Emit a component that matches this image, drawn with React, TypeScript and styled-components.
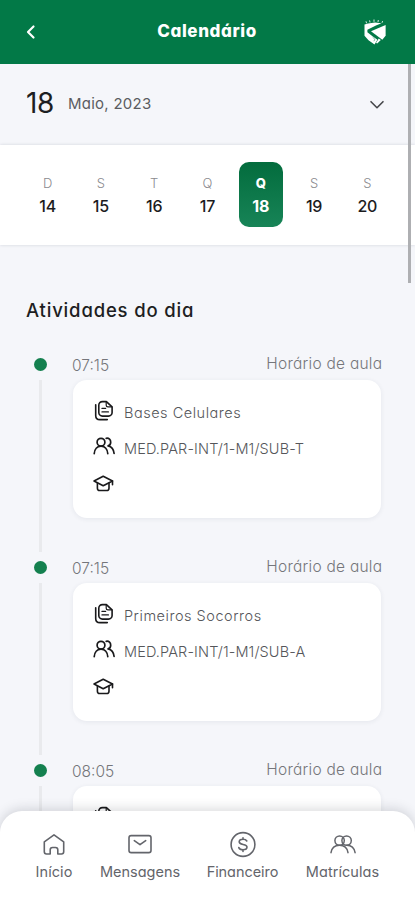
import React from 'react';
import styled, { createGlobalStyle } from 'styled-components';

const GlobalStyle = createGlobalStyle`
  * { box-sizing: border-box; }
  body {
    margin: 0;
    overflow: hidden;
    font-family: Inter, "Open Sans", sans-serif;
    font-feature-settings: "cv11";
  }
  svg { display: block; flex: none; }
`;

const Screen = styled.div`
  position: relative;
  width: 415px;
  height: 900px;
  overflow: hidden;
  display: flex;
  flex-direction: column;
  background: #f5f6fa;
`;

const Header = styled.header`
  flex: none;
  height: 64px;
  padding: 0 29px 0 22px;
  display: flex;
  align-items: center;
  justify-content: space-between;
  background: #027947;
  color: #fff;
`;

const Title = styled.h1`
  margin: 0 0 2px 10px;
  font-size: 17px;
  font-weight: 800;
  letter-spacing: 0.6px;
`;

const DateRow = styled.div`
  flex: none;
  height: 81px;
  padding: 0 28px 0 26px;
  display: flex;
  align-items: center;
  color: #1d1e22;
`;

const DayNumber = styled.span`
  width: 42px;
  font-size: 28px;
  line-height: 34px;
  margin-bottom: 4px;
  letter-spacing: -0.5px;
`;

const Month = styled.span`
  flex: 1;
  font-size: 15px;
  color: #5b5c61;
  margin-bottom: 2px;
  letter-spacing: 0.25px;
`;

const Week = styled.div`
  flex: none;
  height: 100px;
  padding: 17px 21px 0;
  display: grid;
  grid-template-columns: repeat(7, 1fr);
  justify-items: center;
  align-items: start;
  background: #fff;
  box-shadow: 0 0 3px rgba(30, 40, 60, 0.16);
`;

const Day = styled.div<{ $active?: boolean }>`
  width: 44px;
  height: 65px;
  padding-top: 13px;
  border-radius: 10px;
  display: flex;
  flex-direction: column;
  align-items: center;
  color: ${(p) => (p.$active ? '#fff' : '#1c1c1e')};
  background: ${(p) => (p.$active ? 'linear-gradient(#036c3d, #178457)' : 'none')};
`;

const Letter = styled.span<{ $active?: boolean }>`
  font-size: 13px;
  line-height: 17px;
  font-weight: ${(p) => (p.$active ? 800 : 300)};
  color: ${(p) => (p.$active ? '#fff' : '#8a8a8e')};
`;

const Num = styled.span<{ $active?: boolean }>`
  margin-top: 3px;
  font-size: 16px;
  line-height: 22px;
  font-weight: ${(p) => (p.$active ? 700 : 500)};
  letter-spacing: -0.2px;
`;

const SectionTitle = styled.h2`
  margin: 52px 0 0 26px;
  font-size: 18.5px;
  line-height: 26px;
  font-weight: 500;
  color: #1d1e22;
  letter-spacing: 0.83px;
`;

const Timeline = styled.div`
  padding: 35px 34px 0;
`;

const Entry = styled.div`
  height: 203px;
  display: grid;
  grid-template-columns: 39px 1fr;
`;

const Rail = styled.div`
  display: flex;
  flex-direction: column;
  align-items: flex-start;
`;

const Dot = styled.div`
  flex: none;
  width: 13px;
  height: 13px;
  border-radius: 50%;
  background: #14804f;
`;

const Line = styled.div`
  width: 3px;
  height: 172px;
  margin: 9px 0 0 5px;
  background: #e9eaed;
`;

const EntryHead = styled.div`
  height: 22px;
  margin-right: -1px;
  display: flex;
  justify-content: space-between;
  color: #75767b;
  font-size: 15.5px;
  line-height: 15px;
  font-weight: 300;
`;

const Time = styled.span`
  margin-left: -1px;
  letter-spacing: 0;
`;

const Kind = styled.span`
  margin: -2px -0.3px 0 0;
  letter-spacing: 0.25px;
`;

const Card = styled.div`
  height: 138px;
  padding: 19px 20px;
  border-radius: 14px;
  background: #fff;
  box-shadow: 0 1px 5px rgba(40, 50, 80, 0.08);
`;

const CardRow = styled.div`
  height: 36px;
  display: flex;
  align-items: flex-start;
  gap: 9px;
  color: #19191b;
`;

const CardText = styled.span<{ $code?: boolean }>`
  padding-top: 4px;
  font-size: 14.5px;
  line-height: 19px;
  font-weight: 300;
  color: #55565a;
  letter-spacing: ${(p) => (p.$code ? '0.12px' : '0.52px')};
`;

const ScrollThumb = styled.div`
  position: absolute;
  top: 64px;
  right: 4px;
  width: 3px;
  height: 219px;
  background: #aeafb2;
`;

const BottomNav = styled.nav`
  position: absolute;
  left: 0;
  right: 0;
  bottom: 0;
  height: 89px;
  padding: 19px 25px 0;
  display: grid;
  grid-template-columns: 58px 114px 91px 109px;
  border-radius: 22px 22px 0 0;
  background: #fff;
  box-shadow: 0 -2px 12px rgba(30, 35, 45, 0.17);
`;

const NavItem = styled.div`
  display: flex;
  flex-direction: column;
  align-items: center;
  gap: 5px;
  color: #63656b;
`;

const NavLabel = styled.span<{ $spacing: number }>`
  font-size: 14.5px;
  line-height: 18px;
  font-weight: 400;
  white-space: nowrap;
  letter-spacing: ${(p) => p.$spacing}px;
`;

const stroke = {
  fill: 'none',
  stroke: 'currentColor',
  strokeLinecap: 'round' as const,
  strokeLinejoin: 'round' as const,
};

const BackIcon = () => (
  <svg width="18" height="18" viewBox="0 0 18 18" {...stroke} strokeWidth="2.2">
    <path d="M11.5 3.5 6 9l5.5 5.5" />
  </svg>
);

const ShieldLogo = () => (
  <svg width="22" height="26" viewBox="0 0 22 26" fill="#fff">
    <path d="M.5 5.5 4 4.4 11 3.6l6.5.7-5 2L3.4 10.8v2.4l5.1 4 4.9 3.6-2.9 4.7-6-4.3L.5 16.8Z" />
    <path d="M21.6 6v10.8l-3.3 4L7 12.2Z" />
    <path d="m14.8 19.4 2 1.5-3.6 3.6-1.2-.8Z" />
    <path d="M2.6 4.3 2 2.3M6 3.4 5.6 1.4M10 2.8V.5M14 3l.3-2M18 3.8l.6-1.7" stroke="#d9ebe2" strokeWidth="1" fill="none" />
    <path d="m8.6 18.2 2.3 2-1 2" stroke="#4da37d" strokeWidth=".7" fill="none" />
  </svg>
);

const ChevronIcon = () => (
  <svg width="20" height="20" viewBox="0 0 20 20" {...stroke} stroke="#45464a" strokeWidth="1.6">
    <path d="m4 6.7 6 6 6-6" />
  </svg>
);

const DocsIcon = () => (
  <svg width="22" height="24" viewBox="0 0 22 24" {...stroke} strokeWidth="1.6">
    <path d="M9.4 2.6h4l5.7 5.2v5.7a3.6 3.6 0 0 1-3.6 3.6H9.4a3.6 3.6 0 0 1-3.6-3.6V6.2a3.6 3.6 0 0 1 3.6-3.6Z" />
    <path d="M13.2 2.8v3.4c0 1 .6 1.7 1.7 1.7h3.8" strokeWidth="1.2" />
    <path d="M9 9.4h3.6M9 12.9h6.4" strokeWidth="1.3" />
    <path d="M2.7 5.8v10.6c0 2.7 1.5 4.2 4.2 4.2h7.4" />
  </svg>
);

const PeopleIcon = () => (
  <svg width="22" height="22" viewBox="0 0 22 22" {...stroke} strokeWidth="1.7">
    <circle cx="8" cy="7.2" r="3.9" />
    <path d="M1.2 18.7c.3-4.4 2.9-7.5 6.8-7.5s6.5 3.1 6.8 7.5M13.2 3.3c2.8-.5 4.5 1.4 4.5 3.9 0 1.8-1 3.2-2.6 3.7 3.5.8 5.6 3.9 6 7.6" />
  </svg>
);

const CapIcon = () => (
  <svg width="22" height="22" viewBox="0 0 22 22" {...stroke} strokeWidth="1.6">
    <path d="M1 10 10.2 5.2l9.3 4.8-9.3 4.8Z" />
    <path d="M4.4 12v5.2c0 1.5.8 2.3 2.3 2.3h7c1.5 0 2.3-.8 2.3-2.3V12M19.5 10v3.8" />
  </svg>
);

const HomeIcon = () => (
  <svg width="28" height="28" viewBox="0 0 28 28" {...stroke} strokeWidth="1.6">
    <path d="M4.3 11.8 14 4.8l9.7 7v10c0 1.4-.8 2.2-2.2 2.2h-3.7v-4.2c0-1.5-.8-2.3-2.3-2.3h-3c-1.5 0-2.3.8-2.3 2.3V24H6.5c-1.4 0-2.2-.8-2.2-2.2Z" />
  </svg>
);

const MailIcon = () => (
  <svg width="28" height="28" viewBox="0 0 28 28" {...stroke} strokeWidth="1.6">
    <rect x="3" y="5.6" width="22" height="17" rx="2.2" />
    <path d="m8.3 10.6 5.7 4.1 5.7-4.1" />
  </svg>
);

const MoneyIcon = () => (
  <svg width="28" height="28" viewBox="0 0 28 28" {...stroke} strokeWidth="1.6">
    <circle cx="14" cy="14.5" r="11.9" />
    <path d="M17.8 11c-.6-1.1-1.9-1.8-3.8-1.8-2.3 0-3.8 1-3.8 2.6 0 3.8 7.8 1.5 7.8 5.3 0 1.7-1.7 2.7-4 2.7-2.1 0-3.6-.8-4.2-2.2M14 7.7v1.5m0 10.6v1.6" />
  </svg>
);

const GroupIcon = () => (
  <svg width="28" height="28" viewBox="0 0 28 28" {...stroke} strokeWidth="1.5">
    <circle cx="10.6" cy="10.6" r="4.7" />
    <circle cx="17.6" cy="10.6" r="4.7" />
    <path d="M2 22.7c.7-4.6 4-7.4 8.5-7.4s7.8 2.8 8.5 7.4M17.8 15.3c4.2 0 7.5 2.8 8.3 7.4" />
  </svg>
);

const days = [
  ['D', '14'], ['S', '15'], ['T', '16'], ['Q', '17'], ['Q', '18'], ['S', '19'], ['S', '20'],
];

const entries = [
  { time: '07:15', subject: 'Bases Celulares', group: 'MED.PAR-INT/1-M1/SUB-T' },
  { time: '07:15', subject: 'Primeiros Socorros', group: 'MED.PAR-INT/1-M1/SUB-A' },
  { time: '08:05', subject: '', group: '' },
];

const navItems = [
  { label: 'Início', icon: <HomeIcon />, spacing: 0.05 },
  { label: 'Mensagens', icon: <MailIcon />, spacing: 0 },
  { label: 'Financeiro', icon: <MoneyIcon />, spacing: -0.05 },
  { label: 'Matrículas', icon: <GroupIcon />, spacing: 0.05 },
];

export default function App() {
  return (
    <>
      <GlobalStyle />
      <Screen>
        <Header>
          <BackIcon />
          <Title>Calendário</Title>
          <ShieldLogo />
        </Header>
        <DateRow>
          <DayNumber>18</DayNumber>
          <Month>Maio, 2023</Month>
          <ChevronIcon />
        </DateRow>
        <Week>
          {days.map(([letter, num]) => {
            const active = num === '18';
            return (
              <Day key={num} $active={active}>
                <Letter $active={active}>{letter}</Letter>
                <Num $active={active}>{num}</Num>
              </Day>
            );
          })}
        </Week>
        <SectionTitle>Atividades do dia</SectionTitle>
        <Timeline>
          {entries.map((entry, i) => (
            <Entry key={i}>
              <Rail>
                <Dot />
                <Line />
              </Rail>
              <div>
                <EntryHead>
                  <Time>{entry.time}</Time>
                  <Kind>Horário de aula</Kind>
                </EntryHead>
                <Card>
                  <CardRow>
                    <DocsIcon />
                    <CardText>{entry.subject}</CardText>
                  </CardRow>
                  <CardRow>
                    <PeopleIcon />
                    <CardText $code>{entry.group}</CardText>
                  </CardRow>
                  <CardRow>
                    <CapIcon />
                  </CardRow>
                </Card>
              </div>
            </Entry>
          ))}
        </Timeline>
        <ScrollThumb />
        <BottomNav>
          {navItems.map((item) => (
            <NavItem key={item.label}>
              {item.icon}
              <NavLabel $spacing={item.spacing}>{item.label}</NavLabel>
            </NavItem>
          ))}
        </BottomNav>
      </Screen>
    </>
  );
}
